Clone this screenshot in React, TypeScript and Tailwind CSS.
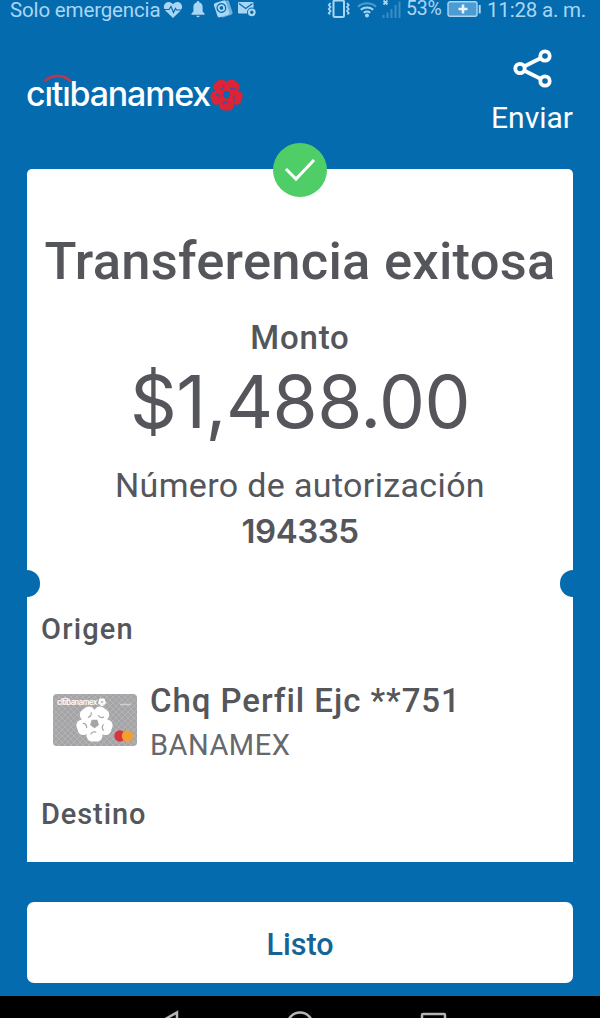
import React from "react";

const PETALS = [0, 72, 144, 216, 288];

function Flower({
  className,
  color,
  gap,
}: {
  className?: string;
  color: string;
  gap: string;
}) {
  return (
    <svg viewBox="0 0 40 40" className={className}>
      {PETALS.map((angle) => (
        <g key={angle} transform={`rotate(${angle} 20 20)`}>
          <rect x="11.500" y="22.500" width="17" height="17" rx="6" fill={color} />
        </g>
      ))}
      {PETALS.map((angle) => (
        <g key={angle} transform={`rotate(${angle} 20 20)`}>
          <path
            d="M16 32c.5-2.500 3-3.500 6-2.500"
            fill="none"
            stroke={gap}
            strokeWidth="1.300"
          />
        </g>
      ))}
      <path d="M20 25 15.200 21.500 17 15.900h6l1.800 5.600z" fill={gap} />
    </svg>
  );
}

function StatusBar() {
  return (
    <div className="flex h-[22px] items-start whitespace-nowrap text-[#a9d6f5]">
      <span className="ml-[10px] w-[152px] text-[20.500px] leading-5 tracking-[-0.150px]">
        Solo emergencia
      </span>
      <svg viewBox="0 0 20 18" className="ml-[1px] mt-px h-[18px] w-5" fill="currentColor">
        <path d="M10 17 2.300 9.500C-2.200 4 5 -2.500 10 3.200 15 -2.500 22.200 4 17.700 9.500z" />
        <path d="M1 8.500h5l2-3 2.500 6 2-4 1 1.500H19" fill="none" stroke="#046bae" strokeWidth="1.200" />
      </svg>
      <svg viewBox="0 0 14 17" className="ml-2 mt-px h-[17px] w-[14px]" fill="currentColor">
        <path d="M7 0c-.8 0-1.200.5-1.200 1.300C3.500 2 2.400 3.700 2.400 6v4.500L.5 12.500v1.200h13v-1.200l-1.900-2V6c0-2.300-1.100-4-3.400-4.700C8.200.5 7.800 0 7 0zM5.400 14.700a1.600 1.600 0 0 0 3.200 0z" />
      </svg>
      <svg viewBox="0 0 20 18" className="ml-[8px] mt-0 h-[18px] w-5">
        <g transform="rotate(-18 10 9)">
          <rect x="6" y="2" width="12" height="15" rx="2" fill="#6fb0dc" />
          <rect x="2.500" y="1" width="12.500" height="15" rx="2" fill="currentColor" />
          <circle cx="8.800" cy="7.500" r="4.300" fill="none" stroke="#046bae" strokeWidth="1.300" />
          <circle cx="8.800" cy="7.500" r="1.800" fill="#046bae" />
        </g>
      </svg>
      <svg viewBox="0 0 20 16" className="ml-[4px] mt-[2px] h-4 w-5">
        <rect x="1" y="0" width="15.500" height="11.500" rx="1" fill="currentColor" />
        <path d="m2 1.500 6.700 5 6.800-5" fill="none" stroke="#046bae" strokeWidth="1.200" />
        <circle cx="14.800" cy="10.300" r="4.800" fill="#046bae" />
        <circle cx="14.800" cy="10.300" r="2.800" fill="none" stroke="currentColor" strokeWidth="2.200" />
      </svg>
      <svg viewBox="0 0 26 20" className="ml-[69px] mt-[-1px] h-5 w-[26px]" fill="none" stroke="currentColor">
        <rect x="7.500" y="1.500" width="10.500" height="16.500" rx="1.500" strokeWidth="2" />
        <path d="M4.500 4 2.800 6l1.700 2-1.700 2 1.700 2-1.700 2 1.200 1.500M21 4l1.700 2L21 8l1.700 2L21 12l1.700 2-1.200 1.500" strokeWidth="1.800" />
      </svg>
      <svg viewBox="0 0 20 17" className="ml-[5px] mt-px h-[17px] w-5" fill="none" stroke="currentColor" strokeWidth="2">
        <path d="M1 5.700C6 1.200 14 1.200 19 5.700" opacity=".45" />
        <path d="M3.800 8.800c3.600-3 8.800-3 12.400 0M6.700 11.700c2-1.500 4.600-1.500 6.600 0" />
        <circle cx="10" cy="14.500" r="1" />
      </svg>
      <svg viewBox="0 0 20 20" className="ml-[5px] mt-[-1px] h-5 w-5">
        <path d="m1.500 1.500 4 4m0-4-4 4" stroke="currentColor" strokeWidth="1.800" />
        <path d="M1.500 16v3M5.500 13.500V19M9.500 10v9M13.500 6v13M17.500 2.500V19" stroke="#5fa5d6" strokeWidth="2" opacity=".6" />
      </svg>
      <span className="ml-[4px] w-[38px] text-[19.500px] leading-[18px] tracking-[-0.200px]">
        53%
      </span>
      <svg viewBox="0 0 34 16" className="ml-[3px] mt-px h-4 w-[34px]">
        <rect x="1" y=".8" width="29" height="14.500" rx="2" fill="#4d9bd0" stroke="currentColor" strokeWidth="1.400" />
        <path d="M32.700 4v8.500" stroke="currentColor" strokeWidth="2" />
        <path d="M16 3.500v9M11.500 8h9" stroke="#e4f4ff" strokeWidth="2.600" />
      </svg>
      <span className="ml-[6px] text-[20.500px] leading-5 tracking-[-0.200px]">
        11:28 a. m.
      </span>
    </div>
  );
}

function Logo() {
  return (
    <div className="relative flex h-[50px] items-center">
      <span
        aria-label="citibanamex"
        className="w-[184px] whitespace-nowrap font-['Inter',sans-serif] text-[34px] font-medium leading-[40px] tracking-[-1.2px]"
      >
        cıtıbanamex
      </span>
      <Flower className="h-[33px] w-[33px]" color="#dc2338" gap="#046bae" />
      <svg viewBox="0 0 30 10" className="absolute left-[17px] top-[4px] h-[10px] w-[30px]">
        <path d="M1.500 8.500C8 1 21 1 28 8.500" fill="none" stroke="#b23a55" strokeWidth="3" />
      </svg>
    </div>
  );
}

function CardThumb() {
  return (
    <div className="relative h-[52px] w-[84px] overflow-hidden rounded-[4px] bg-[#a5a5a8]">
      <svg viewBox="0 0 84 52" className="absolute inset-0 h-full w-full">
        <defs>
          <pattern id="weave" width="6" height="6" patternUnits="userSpaceOnUse">
            <path d="M0 3 3 0l3 3-3 3z" fill="none" stroke="#b6b6b9" strokeWidth=".8" />
          </pattern>
        </defs>
        <rect width="84" height="52" fill="url(#weave)" />
        <path d="M8 5.500q4-3 9 0" fill="none" stroke="#fff" strokeWidth=".9" />
        <path d="M67 10.500h11" stroke="#d0d0d2" strokeWidth="1.500" />
        <circle cx="67" cy="42" r="5.700" fill="#d8343a" />
        <circle cx="74.500" cy="42" r="5.700" fill="#f0a032" />
      </svg>
      <span className="absolute left-[4px] top-[3px] font-['Inter',sans-serif] text-[7.500px] font-semibold leading-[11px] tracking-[-0.400px] text-white">
        citibanamex
      </span>
      <Flower className="absolute left-[45px] top-[4px] h-[8px] w-[8px]" color="#fff" gap="#a5a5a8" />
      <Flower className="absolute left-[23px] top-[11px] h-[37px] w-[37px]" color="#fff" gap="#a5a5a8" />
    </div>
  );
}

function Receipt() {
  return (
    <div className="relative mx-[27px] h-[693px] whitespace-nowrap rounded-t-[5px] bg-white text-[#54565b]">
      <div className="absolute left-[246px] top-[-26px] flex h-[54px] w-[54px] items-center justify-center rounded-full bg-[#4fce68]">
        <svg viewBox="0 0 32 26" className="h-[26px] w-8" fill="none" stroke="#fff" strokeWidth="3">
          <path d="m2 12 10 10L30 3" />
        </svg>
      </div>
      <div className="absolute left-[-13px] top-[401px] h-[27px] w-[26px] rounded-full bg-[#046bae]" />
      <div className="absolute right-[-13px] top-[401px] h-[27px] w-[26px] rounded-full bg-[#046bae]" />

      <div className="flex flex-col items-center pt-[62px]">
        <h1 className="text-[52.500px] font-medium leading-[60px] tracking-[0.250px]">
          Transferencia exitosa
        </h1>
        <p className="mt-[27px] text-[33px] font-medium leading-10 tracking-[0.800px]">Monto</p>
        <p className="mt-[4px] font-['Inter',sans-serif] text-[73px] font-normal leading-[80px] tracking-[-0.500px]">
          $1,488.00
        </p>
        <p className="mt-[23px] text-[34px] leading-10 tracking-[0.350px]">
          Número de autorización
        </p>
        <p className="mt-[6px] font-['Inter',sans-serif] text-[33px] font-semibold leading-10 tracking-[-0.500px]">
          194335
        </p>
      </div>

      <p className="ml-[14px] mt-[60px] text-[29px] font-medium leading-9 tracking-[1.200px]">Origen</p>
      <div className="mt-[34px] flex pl-[26px]">
        <div className="mt-[13px]">
          <CardThumb />
        </div>
        <div className="ml-[13px]">
          <p className="text-[33px] font-medium leading-10 tracking-[0.950px]">
            Chq Perfil Ejc **751
          </p>
          <p className="mt-[6px] text-[29px] leading-9 tracking-[0.500px] text-[#66686c]">BANAMEX</p>
        </div>
      </div>
      <p className="ml-[14px] mt-[33px] text-[29px] font-medium leading-9 tracking-[0.900px]">Destino</p>
    </div>
  );
}

function NavBar() {
  return (
    <div className="h-[22px] overflow-hidden bg-black">
      <svg viewBox="0 0 600 22" className="h-[22px] w-[600px]" fill="none" stroke="#b5b5b5" strokeWidth="2.500">
        <path d="M160 26l17-9.500V34" />
        <circle cx="300" cy="29" r="12.500" />
        <rect x="422" y="18" width="23" height="23" rx="1" />
      </svg>
    </div>
  );
}

export default function App() {
  return (
    <div className="flex h-[1018px] w-[600px] flex-col overflow-hidden bg-[#046bae] font-['Roboto',sans-serif]">
      <StatusBar />
      <header className="flex h-[147px] justify-between pl-[26px] pr-[27px] text-white">
        <div className="mt-[47px]">
          <Logo />
        </div>
        <div className="flex flex-col items-center pt-[27px]">
          <svg viewBox="0 0 40 40" className="ml-[2px] h-10 w-10" fill="none" stroke="currentColor" strokeWidth="3.800">
            <circle cx="7" cy="19.500" r="4.700" />
            <circle cx="32" cy="7" r="4.700" />
            <circle cx="32" cy="32" r="4.700" />
            <path d="m11.500 17.200 16-8M11.500 21.700l16 8" />
          </svg>
          <span className="mt-[11px] text-[30px] leading-9">Enviar</span>
        </div>
      </header>
      <Receipt />
      <button className="mx-[27px] mt-[40px] h-[81px] shrink-0 rounded-[7px] bg-white pt-[5px] text-[30.500px] font-medium text-[#156496]">
        Listo
      </button>
      <div className="mt-auto">
        <NavBar />
      </div>
    </div>
  );
}
